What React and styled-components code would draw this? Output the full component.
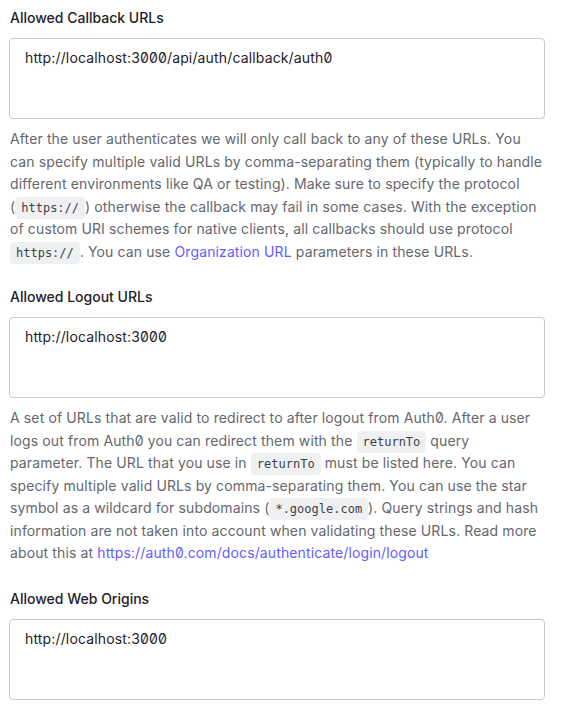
import React from 'react';
import styled, { createGlobalStyle } from 'styled-components';

const GlobalStyle = createGlobalStyle`
    body {
        margin: 0;
        background: #ffffff;
        font-family: Inter, "Noto Sans", sans-serif;
    }
`;

const App = () => {
    return (
        <Page>
            <GlobalStyle />
            <Field>
                <Label>Allowed Callback URLs</Label>
                <Input defaultValue="http://localhost:3000/api/auth/callback/auth0" />
                <Help>
                    After the user authenticates we will only call back to any of these URLs. You
                    can specify multiple valid URLs by comma-separating them (typically to handle
                    different environments like QA or testing). Make sure to specify the protocol
                    (<Code>https://</Code>) otherwise the callback may fail in some cases. With the
                    exception of custom URI schemes for native clients, all callbacks should use
                    protocol <Code>https://</Code>. You can use <Link href="#">Organization URL</Link> parameters
                    in these URLs.
                </Help>
            </Field>
            <Field>
                <Label>Allowed Logout URLs</Label>
                <Input defaultValue="http://localhost:3000" />
                <Help>
                    A set of URLs that are valid to redirect to after logout from Auth0. After a user
                    logs out from Auth0 you can redirect them with the <Code>returnTo</Code> query
                    parameter. The URL that you use in <Code>returnTo</Code> must be listed here. You
                    can specify multiple valid URLs by comma-separating them. You can use the star
                    symbol as a wildcard for subdomains (<Code>*.google.com</Code>). Query strings and
                    hash information are not taken into account when validating these URLs. Read more
                    about this at <Link href="#">https://auth0.com/docs/authenticate/login/logout</Link>
                </Help>
            </Field>
            <Field>
                <Label>Allowed Web Origins</Label>
                <Input defaultValue="http://localhost:3000" />
            </Field>
        </Page>
    );
}

const Page = styled.div`
    display: flex;
    flex-direction: column;
    gap: 24px;
    padding: 8px 16px 0 9px;
`;

const Field = styled.div`
    display: flex;
    flex-direction: column;
`;

const Label = styled.label`
    font-size: 14px;
    font-weight: 500;
    line-height: 20px;
    color: #1e212a;
    margin: 0 0 10px 1px;
`;

const Input = styled.textarea`
    box-sizing: border-box;
    width: 100%;
    height: 81px;
    padding: 8px 15px;
    border: 1px solid #c9cace;
    border-radius: 4px;
    font-family: Inter, "Noto Sans", sans-serif;
    font-feature-settings: "zero" 1;
    font-size: 14px;
    letter-spacing: 0.15px;
    line-height: 22px;
    color: #1e212a;
    resize: none;
    outline: none;
`;

const Help = styled.p`
    margin: 9px 0 0 1px;
    font-size: 14px;
    letter-spacing: 0.12px;
    line-height: 22.5px;
    color: #65676e;
    font-feature-settings: "zero" 1;
`;

const Code = styled.code`
    font-family: "DejaVu Sans Mono", monospace;
    font-size: 12px;
    line-height: 1;
    letter-spacing: 0;
    background: #eff0f2;
    border-radius: 4px;
    padding: 4px 6px;
    color: #3f4148;
`;

const Link = styled.a`
    color: #635dff;
    text-decoration: none;
`;

export default App;
